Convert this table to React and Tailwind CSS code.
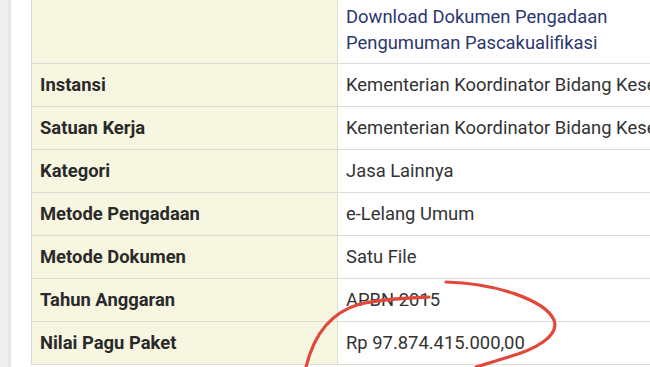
const rows = [
  ['Instansi', 'Kementerian Koordinator Bidang Kesejahteraan Rakyat'],
  ['Satuan Kerja', 'Kementerian Koordinator Bidang Kesejahteraan Rakyat'],
  ['Kategori', 'Jasa Lainnya'],
  ['Metode Pengadaan', 'e-Lelang Umum'],
  ['Metode Dokumen', 'Satu File'],
  ['Tahun Anggaran', 'APBN 2015'],
  ['Nilai Pagu Paket', 'Rp 97.874.415.000,00'],
]

export default function App() {
  return (
    <div className="relative flex h-[367px] w-[650px] overflow-hidden bg-white font-['Roboto','Noto_Sans',sans-serif] text-[18.4px]">
      {/* side strip */}
      <div className="w-[11px] shrink-0 border-r-[3px] border-[#e6e6e6] bg-[#efefef]" />
      <div className="w-[20px] shrink-0 bg-white" />
      <div className="w-[900px] shrink-0">
        <div className="flex border-x border-b border-[#dcdcd4]">
          <div className="w-[306px] shrink-0 border-r border-[#dcdcd4] bg-[#f7f7e1]" />
          <div className="flex-1 px-[8px] pt-[4px] pb-[7px] leading-[26px] text-[#2b3770]">
            <div>Download Dokumen Pengadaan</div>
            <div>Pengumuman Pascakualifikasi</div>
          </div>
        </div>
        {rows.map(([label, value]) => (
          <div key={label} className="flex h-[43px] border-x border-b border-[#dcdcd4]">
            <div className="flex w-[306px] shrink-0 items-center border-r border-[#dcdcd4] bg-[#f7f7e1] px-[8px] font-bold text-[#2a2a2a]">
              {label}
            </div>
            <div className="flex flex-1 items-center px-[8px] whitespace-nowrap text-[#333333]">
              {value}
            </div>
          </div>
        ))}
      </div>
      {/* red marker annotation */}
      <svg className="pointer-events-none absolute inset-0" width="650" height="367" viewBox="0 0 650 367">
        <path
          d="M429 297 C405 298 380 299 360 304 C335 311 315 330 306 367"
          fill="none"
          stroke="#e0483b"
          strokeWidth="3.2"
          strokeLinecap="round"
        />
        <path
          d="M446 282 C495 283 545 300 554 320 C560 336 535 350 505 358 C492 362 483 365 476 367"
          fill="none"
          stroke="#e0483b"
          strokeWidth="3.2"
          strokeLinecap="round"
        />
      </svg>
    </div>
  )
}
